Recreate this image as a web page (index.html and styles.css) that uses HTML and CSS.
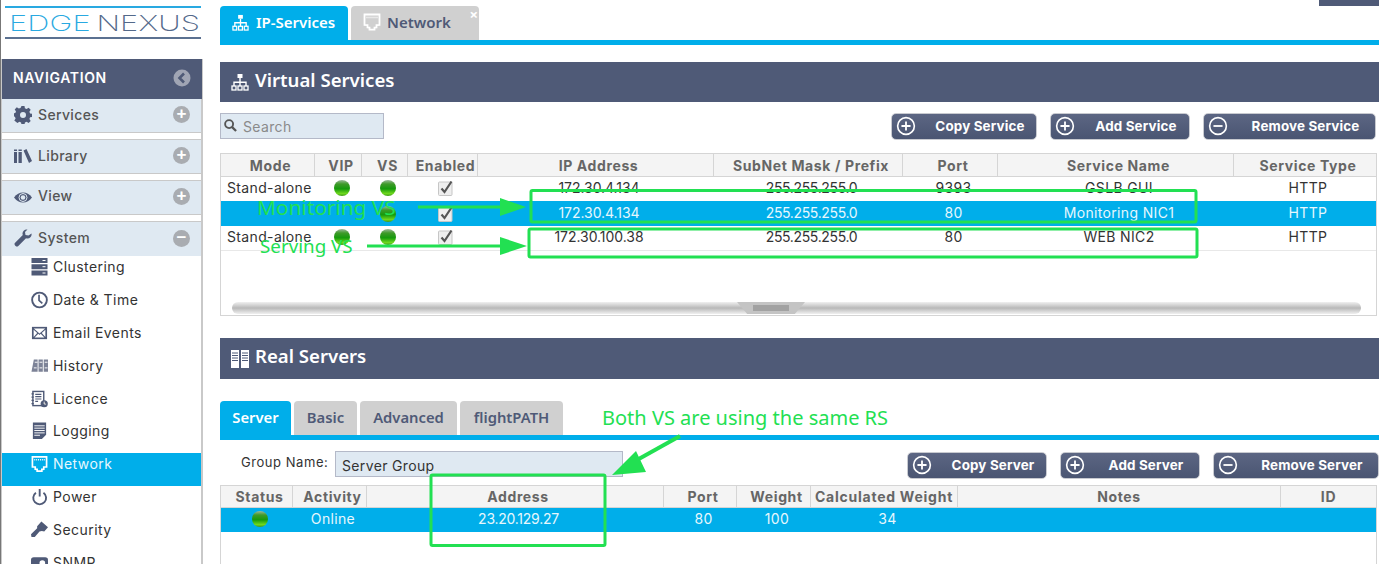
FILE: index.html
```html
<!DOCTYPE html>
<html lang="en">
<head>
<meta charset="utf-8">
<title>EdgeNexus</title>
<link rel="stylesheet" href="styles.css">
</head>
<body>
<svg class="defs" width="0" height="0" aria-hidden="true">
  <defs>
    <linearGradient id="led" x1="0" y1="0" x2="0" y2="1">
      <stop offset="0" stop-color="#9db89d"/><stop offset=".25" stop-color="#3f9a2a"/><stop offset=".55" stop-color="#159a0c"/><stop offset=".85" stop-color="#6fd81e"/><stop offset="1" stop-color="#3f9a18"/>
    </linearGradient>
    <symbol id="i-net" viewBox="0 0 18 18"><path fill="none" stroke="currentColor" stroke-width="1.4" d="M9 5v4M3 13V9.300h12V13M9 9v4"/><rect x="6.500" y="1" width="5" height="4" fill="currentColor"/><rect x="1" y="13" width="4" height="4" fill="none" stroke="currentColor" stroke-width="1.300"/><rect x="7" y="13" width="4" height="4" fill="none" stroke="currentColor" stroke-width="1.300"/><rect x="13" y="13" width="4" height="4" fill="none" stroke="currentColor" stroke-width="1.300"/></symbol>
    <symbol id="i-port" viewBox="0 0 18 18"><path fill="none" stroke="currentColor" stroke-width="1.800" d="M1.500 1.500h15v10.500l-3 .2v2.300l-2 .1v2h-5v-2l-2-.1v-2.300l-3-.2z"/><path stroke="currentColor" stroke-width="1.500" stroke-dasharray="1 1" d="M3.500 4.500h11"/></symbol>
    <symbol id="i-plus" viewBox="0 0 22 22"><circle cx="11" cy="11" r="9.200" fill="none" stroke="currentColor" stroke-width="1.800"/><path stroke="currentColor" stroke-width="2" d="M11 6v10M6 11h10"/></symbol>
    <symbol id="i-minus" viewBox="0 0 22 22"><circle cx="11" cy="11" r="9.200" fill="none" stroke="currentColor" stroke-width="1.800"/><path stroke="currentColor" stroke-width="2" d="M6 11h10"/></symbol>
    <symbol id="i-check" viewBox="0 0 16 16"><rect x=".500" y="2" width="13.500" height="13.500" rx="1" fill="#eee" stroke="#c6c6c6"/><path fill="none" stroke="#555" stroke-width="2.200" d="M3.500 8.500l3 3.500 7-10.500"/></symbol>
  </defs>
</svg>

<aside class="sidebar">
  <div class="logo"><div class="logo-text"><span class="logo-edge">EDGE</span><span class="logo-nexus">NEXUS</span></div></div>
  <nav class="nav">
    <div class="nav-title">NAVIGATION
      <svg class="nav-collapse" viewBox="0 0 18 18"><circle cx="9" cy="9" r="8.500" fill="#a0a5b4"/><path fill="none" stroke="#4f5a77" stroke-width="2.600" d="M11 4.500L6.500 9l4.500 4.500"/></svg>
    </div>
    <div class="acc">
      <svg class="acc-icon" viewBox="0 0 18 18"><path fill="#4f5a77" d="M7.500 0h3l.4 2.300 1.700.7 2-1.300 2.100 2.100-1.300 2 .7 1.700 2.300.4v3l-2.300.4-.7 1.700 1.300 2-2.100 2.100-2-1.300-1.700.7-.4 2.300h-3l-.4-2.300-1.700-.7-2 1.300L.3 14.500l1.300-2-.7-1.700L-1 10.400V7.500l2.300-.4.700-1.700-1.300-2 2.100-2.100 2 1.300 1.700-.7zM9 6a3 3 0 100 6 3 3 0 000-6z"/></svg>
      <span class="acc-label">Services</span><span class="acc-sign">+</span>
    </div>
    <div class="acc">
      <svg class="acc-icon" viewBox="0 0 18 18"><path fill="#4f5a77" d="M0 2.500h3V4H0zM0 5h3v11H0zM4.500 2.500h3.300V4H4.500zM4.500 5h3.300v11H4.500zM9.500 3.500l3-1.500 5.500 12-3 2z"/></svg>
      <span class="acc-label">Library</span><span class="acc-sign">+</span>
    </div>
    <div class="acc">
      <svg class="acc-icon" viewBox="0 0 18 18"><path fill="#4f5a77" d="M0 9.500C2.500 6 5.500 4.500 9 4.500s6.500 1.500 9 5c-2.500 3.500-5.500 5-9 5s-6.500-1.500-9-5z"/><circle cx="9" cy="9.500" r="4" fill="none" stroke="#dfe9f2"/><circle cx="9" cy="9.500" r="2.300" fill="#dfe9f2"/></svg>
      <span class="acc-label acc-view">View</span><span class="acc-sign">+</span>
    </div>
    <div class="acc acc-open">
      <svg class="acc-icon" viewBox="0 0 18 18"><path fill="#4f5a77" d="M17.500 4.500c.6 2.500-1.400 5-4 5-.6 0-1.100-.1-1.500-.3l-7.700 7.700c-.8.8-2 .8-2.700 0l-.5-.5c-.8-.8-.8-2 0-2.700L8.800 6c-.2-.5-.3-1-.3-1.500 0-2.600 2.500-4.600 5-4L11 3l.5 3 3 .5z"/></svg>
      <span class="acc-label">System</span><span class="acc-sign">&minus;</span>
    </div>
    <ul class="menu">
      <li class="menu-item"><svg class="menu-icon" viewBox="0 0 16 18"><path fill="#4f5a77" d="M0 0h16v5H0zM0 6.200h16v5H0zM0 12.400h16v5H0z"/><path stroke="#fff" d="M11 2.500h3M11 8.700h3M11 15h3"/></svg>Clustering</li>
      <li class="menu-item"><svg class="menu-icon" viewBox="0 0 18 18"><circle cx="9" cy="9" r="7.800" fill="none" stroke="#4f5a77" stroke-width="2"/><path fill="none" stroke="#4f5a77" stroke-width="1.800" d="M8.500 3.500V9.500l3.500 3"/></svg>Date &amp; Time</li>
      <li class="menu-item"><svg class="menu-icon" viewBox="0 0 18 18"><path fill="#4f5a77" d="M1 2.500h16v13H1z"/><path fill="#fff" d="M3 4.300h12L9 9.500zM2.800 5.600l3.800 3.300-3.800 4.300zM15.200 5.600v7.600l-3.800-4.300zM7.700 9.800L9 11l1.300-1.200 3.900 4H3.800z"/></svg>Email Events</li>
      <li class="menu-item"><svg class="menu-icon" viewBox="0 0 18 18"><path fill="#7d8397" d="M3 2h4v13H0.500zM8 2h4.500v13H8zM13.500 2H18v13h-4.500z"/><path stroke="#fff" d="M4 5h3M9 5h3M14.500 5h3M3 11h3M9 11h3M14.500 11h3"/></svg>History</li>
      <li class="menu-item"><svg class="menu-icon" viewBox="0 0 18 18"><rect x="2" y="1" width="11.500" height="15" fill="none" stroke="#4f5a77" stroke-width="1.500"/><path stroke="#4f5a77" stroke-width="1.300" d="M4.500 4h6.500M4.500 6.500h6.500M4.500 9h6.500M4.500 11.500h3M.5 3.500h2.500M.5 7h2.500M.5 10.500h2.500M.5 14h2.500"/><circle cx="14" cy="14" r="3.800" fill="#4f5a77"/><path stroke="#fff" d="M14 11.800v2.500h2"/></svg>Licence</li>
      <li class="menu-item"><svg class="menu-icon" viewBox="0 0 18 18"><path fill="#4f5a77" d="M2 0h14v13l-4.500 4.500H2z"/><path stroke="#fff" d="M3.500 3.500h11M3.500 6h11M3.500 8.500h11M3.500 11h11M3.500 13.500h6"/></svg>Logging</li>
      <li class="menu-item menu-active"><svg class="menu-icon" viewBox="0 0 18 18"><use href="#i-port"/></svg>Network</li>
      <li class="menu-item"><svg class="menu-icon" viewBox="0 0 18 18"><path fill="none" stroke="#4f5a77" stroke-width="2" d="M5.200 4.500a6.800 6.800 0 108 0"/><path stroke="#4f5a77" stroke-width="2" d="M9.200 0.500v8"/></svg>Power</li>
      <li class="menu-item"><svg class="menu-icon" viewBox="0 0 18 18"><path fill="#4f5a77" d="M11 0l7 6-4 4.500-2.500-.5-2.500.5-5 6H.5L0 13.500l6.500-6.300V5z"/></svg>Security</li>
      <li class="menu-item"><svg class="menu-icon" viewBox="0 0 18 18"><rect y="3" width="18" height="15" rx="3" fill="#4f5a77"/><circle cx="12" cy="9" r="3" fill="#fff"/></svg>SNMP</li>
    </ul>
  </nav>
</aside>

<main class="main">
  <div class="top-corner"></div>
  <div class="page-tabs">
    <div class="page-tab tab-active"><svg class="tab-icon" viewBox="0 0 18 18"><use href="#i-net"/></svg>IP-Services</div>
    <div class="page-tab tab-closable"><svg class="tab-icon tab-port" viewBox="0 0 18 18"><use href="#i-port"/></svg>Network<span class="tab-close">&times;</span></div>
  </div>

  <h2 class="section-head head-vs"><svg class="head-icon" viewBox="0 0 18 18"><use href="#i-net"/></svg>Virtual Services</h2>

  <div class="toolbar">
    <label class="search"><svg class="search-icon" viewBox="0 0 14 14"><circle cx="5.500" cy="5.500" r="4.300" fill="none" stroke="#555" stroke-width="2"/><path stroke="#555" stroke-width="2.400" d="M8.500 8.500l4.500 4.500"/></svg>Search</label>
    <div class="btns">
      <button class="btn btn-copy"><svg class="btn-icon" viewBox="0 0 22 22"><use href="#i-plus"/></svg><span>Copy Service</span></button>
      <button class="btn btn-add"><svg class="btn-icon" viewBox="0 0 22 22"><use href="#i-plus"/></svg><span>Add Service</span></button>
      <button class="btn btn-rem"><svg class="btn-icon" viewBox="0 0 22 22"><use href="#i-minus"/></svg><span>Remove Service</span></button>
    </div>
  </div>

  <div class="grid-box box-vs">
    <div class="row row-head cols-vs">
      <div>Mode</div><div>VIP</div><div>VS</div><div>Enabled</div><div>IP Address</div><div>SubNet Mask / Prefix</div><div>Port</div><div>Service Name</div><div>Service Type</div>
    </div>
    <div class="row cols-vs">
      <div class="left">Stand-alone</div><div><svg class="led" viewBox="0 0 16 16"><circle cx="8" cy="8" r="8" fill="url(#led)"/></svg></div><div><svg class="led" viewBox="0 0 16 16"><circle cx="8" cy="8" r="8" fill="url(#led)"/></svg></div><div><svg class="chk" viewBox="0 0 16 16"><use href="#i-check"/></svg></div><div class="ip">172.30.4.134</div><div class="mask">255.255.255.0</div><div>9393</div><div>GSLB GUI</div><div>HTTP</div>
    </div>
    <div class="row row-sel cols-vs">
      <div></div><div></div><div><svg class="led led-low" viewBox="0 0 16 16"><circle cx="8" cy="8" r="8" fill="url(#led)"/></svg></div><div><svg class="chk chk-low" viewBox="0 0 16 16"><use href="#i-check"/></svg></div><div class="ip">172.30.4.134</div><div class="mask">255.255.255.0</div><div>80</div><div>Monitoring NIC1</div><div>HTTP</div>
    </div>
    <div class="row row-line cols-vs">
      <div class="left">Stand-alone</div><div><svg class="led" viewBox="0 0 16 16"><circle cx="8" cy="8" r="8" fill="url(#led)"/></svg></div><div><svg class="led" viewBox="0 0 16 16"><circle cx="8" cy="8" r="8" fill="url(#led)"/></svg></div><div><svg class="chk" viewBox="0 0 16 16"><use href="#i-check"/></svg></div><div class="ip">172.30.100.38</div><div class="mask">255.255.255.0</div><div>80</div><div>WEB NIC2</div><div>HTTP</div>
    </div>
    <div class="scrollbar"><span class="scroll-grip"></span></div>
  </div>

  <h2 class="section-head head-rs"><svg class="head-icon" viewBox="0 0 18 18"><path fill="currentColor" d="M0 0h8v18H0zM10 0h8v18h-8z"/><path stroke="#4f5a77" d="M1 3h6M1 5.500h6M1 8h6M1 10.500h6M11 3h6M11 5.500h6M11 8h6M11 10.500h6"/></svg>Real Servers</h2>

  <div class="sub-tabs">
    <div class="sub-tab tab-active">Server</div>
    <div class="sub-tab">Basic</div>
    <div class="sub-tab">Advanced</div>
    <div class="sub-tab">flightPATH</div>
  </div>

  <div class="group-bar">
    <span class="group-label">Group Name:</span>
    <div class="group-input">Server Group</div>
    <div class="btns">
      <button class="btn btn-copy2"><svg class="btn-icon" viewBox="0 0 22 22"><use href="#i-plus"/></svg><span>Copy Server</span></button>
      <button class="btn btn-add2"><svg class="btn-icon" viewBox="0 0 22 22"><use href="#i-plus"/></svg><span>Add Server</span></button>
      <button class="btn btn-rem2"><svg class="btn-icon" viewBox="0 0 22 22"><use href="#i-minus"/></svg><span>Remove Server</span></button>
    </div>
  </div>

  <div class="grid-box box-rs">
    <div class="row row-head cols-rs">
      <div>Status</div><div>Activity</div><div>Address</div><div>Port</div><div>Weight</div><div>Calculated Weight</div><div>Notes</div><div>ID</div>
    </div>
    <div class="row row-sel cols-rs">
      <div><svg class="led" viewBox="0 0 16 16"><circle cx="8" cy="8" r="8" fill="url(#led)"/></svg></div><div>Online</div><div class="addr">23.20.129.27</div><div>80</div><div>100</div><div>34</div><div></div><div></div>
    </div>
  </div>
</main>

<svg class="marks" viewBox="0 0 1379 564" aria-hidden="true">
  <g fill="none" stroke="#22e052" stroke-width="3">
    <rect x="531" y="190.500" width="665" height="31.500" rx="1.500"/>
    <rect x="529" y="229" width="668" height="28" rx="1.500"/>
    <rect x="431" y="475" width="174" height="70.500" rx="1.500"/>
    <path d="M418 207h85M367 246h136"/>
    <path stroke-width="4" d="M680 436l-52 29"/>
  </g>
  <path fill="#22e052" d="M500 198l26 9-26 9zM500 237l27 9-27 9zM636 451l-24 24 34-3z"/>
</svg>
<span class="note note-mon">Monitoring VS</span>
<span class="note note-srv">Serving VS</span>
<span class="note note-both">Both VS are using the same RS</span>
</body>
</html>
```

FILE: styles.css
```css
* { box-sizing: border-box; }
html, body { margin: 0; height: 564px; overflow: hidden; }
body { position: relative; display: flex; background: #fff; color: #333; font: 14px/1 Inter, "Liberation Sans", sans-serif; letter-spacing: .35px; }
.defs { position: absolute; }
svg { display: block; flex: none; }

.sidebar { width: 220px; flex: none; height: 564px; overflow: hidden; }
.logo { width: 203px; height: 59px; border-left: 1px solid #777; padding: 0 0 13px 8px; display: flex; align-items: center; position: relative; }
.logo::before, .logo::after { content: ""; position: absolute; left: 4px; width: 196px; height: 2px; }
.logo::before { top: 6px; background: #29a9e1; }
.logo::after { top: 37px; background: #5b7191; }
.logo-text { display: flex; gap: 4px; font: 200 22px/1 Inter, sans-serif; letter-spacing: .1px; transform: scaleX(1.4); transform-origin: left center; white-space: nowrap; }
.logo-edge { color: #29a9e1; }
.logo-nexus { color: #53698a; }

.nav { border-left: 1px solid #c9c9c9; border-right: 2px solid #c9c9c9; height: 505px; box-shadow: -1px 0 0 #777; margin-left: 1px; width: 202px; }
.nav-title { height: 40px; background: #4f5a77; color: #fff; font-weight: 600; font-size: 14px; letter-spacing: .65px; display: flex; align-items: center; justify-content: space-between; padding: 0 2px 2px 11px; margin-right: -1px; }
.nav-collapse { width: 18px; height: 18px; margin-right: 9px; }
.acc { height: 34px; background: #dfe9f2; border-bottom: 1px solid #c9c9c9; display: flex; align-items: center; padding: 0 11px 2px 12px; margin-bottom: 6px; color: #555; font-size: 14px; font-weight: 500; position: relative; }
.acc + .acc { border-top: 1px solid #c9c9c9; height: 35px; }
.acc-icon { width: 18px; height: 18px; margin-right: 6px; }
.acc-label { flex: 1; }
.acc-view { padding-bottom: 2px; }
.acc-sign { width: 17px; height: 17px; border-radius: 50%; background: #a9acb1; color: #fff; font: 700 17px/16px "Liberation Sans", sans-serif; text-align: center; letter-spacing: 0; }
.acc + .acc-open { margin-bottom: 0; height: 35px; border-bottom: 0; }
.menu { list-style: none; margin: 0; padding: 0; }
.menu-item { height: 32.800px; display: flex; align-items: center; padding: 0 0 10px 29px; gap: 5px; color: #333; letter-spacing: .45px; }
.menu-icon { width: 17px; height: 18px; color: #fff; }
.menu-active { background: #00aeea; color: #e6f7fd; }

.main { flex: 1; min-width: 0; height: 564px; overflow: hidden; position: relative; }
.top-corner { position: absolute; right: 0; top: 0; width: 60px; height: 6px; background: #4f5a77; }
.page-tabs { height: 45px; padding-top: 6px; border-bottom: 5px solid #00aeea; display: flex; gap: 3px; }
.page-tab { width: 128px; height: 34px; border-radius: 4px 4px 0 0; background: #d0d0d0; color: #4f5a77; font: 600 15px/1 "Noto Sans", sans-serif; letter-spacing: 0; display: flex; align-items: center; padding: 0 0 2px 12px; position: relative; }
.tab-icon { width: 17px; height: 17px; margin-right: 7px; }
.tab-port { color: #fff; width: 18px; height: 18px; margin-right: 6px; }
.tab-active { background: #00aeea; color: #fff; }
.tab-close { position: absolute; right: 1px; top: 1px; color: #fff; font-size: 15px; font-weight: 700; letter-spacing: 0; }

.section-head { margin: 0; background: #4f5a77; color: #fff; display: flex; align-items: center; font: 600 18.600px/1 "Noto Sans", sans-serif; letter-spacing: 0; padding: 0 0 4px 11px; }
.head-icon { width: 18px; height: 18px; margin-right: 6px; position: relative; top: 2px; }
.head-vs { height: 40px; margin-top: 17px; }
.head-rs { height: 41px; margin-top: 22px; }

.toolbar { display: flex; justify-content: space-between; height: 27px; margin-top: 11px; }
.search { width: 164px; height: 26px; background: #dfe9f2; border: 1px solid #b4b9c8; color: #8a8a8a; display: flex; align-items: center; gap: 6px; padding: 2px 0 0 3px; }
.search-icon { width: 13px; height: 13px; position: relative; top: -2px; }
.btns { display: flex; gap: 13px; margin-left: auto; }
.btn { height: 27px; border: 1px solid #c8cad0; border-radius: 5px; background: linear-gradient(#5c6683, #4a5572); color: #fff; display: flex; align-items: center; padding: 1px 0 0 4px; font: 700 13.400px/1 Inter, sans-serif; letter-spacing: .15px; }
.btn span { flex: 1; text-align: center; padding-left: 8px; white-space: nowrap; }
.btn-icon { width: 20px; height: 20px; position: relative; top: -1px; }
.btn-copy { width: 146px; }
.btn-add { width: 140px; }
.btn-rem { width: 173px; margin-right: 3px; }
.btn-copy2, .btn-add2 { width: 140px; }
.btn-rem2 { width: 166px; }

.grid-box { border: 1px solid #d5d5d5; margin-right: 2px; position: relative; }
.box-vs { height: 163px; margin-top: 13px; }
.box-rs { height: 80px; margin-top: 7px; border-bottom: 0; }
.row { display: grid; height: 24px; align-items: center; text-align: center; padding-bottom: 2px; }
.row > div { padding-left: 6px; }
.cols-vs { grid-template-columns: 94px 47px 46px 70px 236px 189px 95px 236px 1fr; }
.cols-rs { grid-template-columns: 72px 74px 297px 73px 74px 147px 323px 1fr; }
.row-head { height: 23px; background: #f4f4f4; border-bottom: 1px solid #d5d5d5; color: #666; font-weight: 700; font-size: 14px; letter-spacing: .62px; padding-bottom: 0; }
.row-head > div { height: 100%; border-right: 1px solid #d5d5d5; display: flex; align-items: center; justify-content: center; padding-top: 1px; white-space: nowrap; }
.row-head > div:last-child { border-right: 0; }
.cols-rs.row-head { height: 22px; }
.cols-rs.row-head > div:nth-child(6) { padding-left: 0; letter-spacing: .75px; }
.cols-rs.row-head > div:nth-child(n+7) { padding-left: 0; }
.row > div:empty { height: 100%; }
.row > .left { text-align: left; padding-left: 6px; }
.row > div > svg { margin: 0 auto; }
.ip { letter-spacing: -.05px; }
.mask { letter-spacing: -.35px; }
.addr { letter-spacing: -.25px; }
.led { width: 16px; height: 16px; }
.chk { width: 16px; height: 16px; }
.led-low, .chk-low { position: relative; top: 1px; }
.row-sel { background: #00aeea; color: #e6f7fd; height: 25px; }
.cols-rs.row-sel { height: 24px; }
.row-line { border-bottom: 1px solid #e8e8e8; height: 25px; padding-bottom: 3px; }
.scrollbar { position: absolute; left: 11px; right: 15px; bottom: 1px; height: 12px; border-radius: 6px; background: linear-gradient(#f0f0f0, #cfcfcf 30%, #b8b8b8 50%, #cfcfcf 70%, #f0f0f0); }
.scroll-grip { position: absolute; left: 505px; top: 0; width: 68px; height: 12px; background: #c4c4c4; clip-path: polygon(0 0, 100% 0, 85% 100%, 15% 100%); }
.scroll-grip::after { content: ""; position: absolute; left: 16px; right: 16px; top: 3px; height: 6px; background: #a2a2a2; }

.sub-tabs { display: flex; gap: 3px; padding-top: 22px; box-sizing: content-box; border-bottom: 5px solid #00aeea; height: 34px; }
.sub-tab { height: 34px; border-radius: 4px 4px 0 0; background: #d0d0d0; color: #4f5a77; font: 600 14.800px/1 "Noto Sans", sans-serif; letter-spacing: 0; display: flex; align-items: center; justify-content: center; padding-bottom: 2px; }
.sub-tab:nth-child(1) { width: 71px; }
.sub-tab:nth-child(2) { width: 63px; }
.sub-tab:nth-child(3) { width: 97px; }
.sub-tab:nth-child(4) { width: 103px; }
.sub-tab.tab-active { background: #00aeea; color: #fff; }

.group-bar { display: flex; align-items: flex-start; height: 27px; margin-top: 11px; padding-left: 21px; }
.group-label { font-size: 13px; letter-spacing: .55px; padding-top: 5px; width: 94px; }
.group-input { width: 288px; height: 26px; background: #dfe9f2; border: 1px solid #b4b9c8; padding: 7px 0 0 6px; }
.group-bar .btn { margin-top: 1px; }

.marks { position: absolute; left: 0; top: 0; width: 1379px; height: 564px; pointer-events: none; }
.note { position: absolute; color: #22e052; font-family: "Noto Sans", sans-serif; letter-spacing: 0; white-space: nowrap; line-height: 1; }
.note-mon { left: 257px; top: 197px; font-size: 20.800px; }
.note-srv { left: 260px; top: 237px; font-size: 18.800px; }
.note-both { left: 602px; top: 408px; font-size: 20px; }
```
